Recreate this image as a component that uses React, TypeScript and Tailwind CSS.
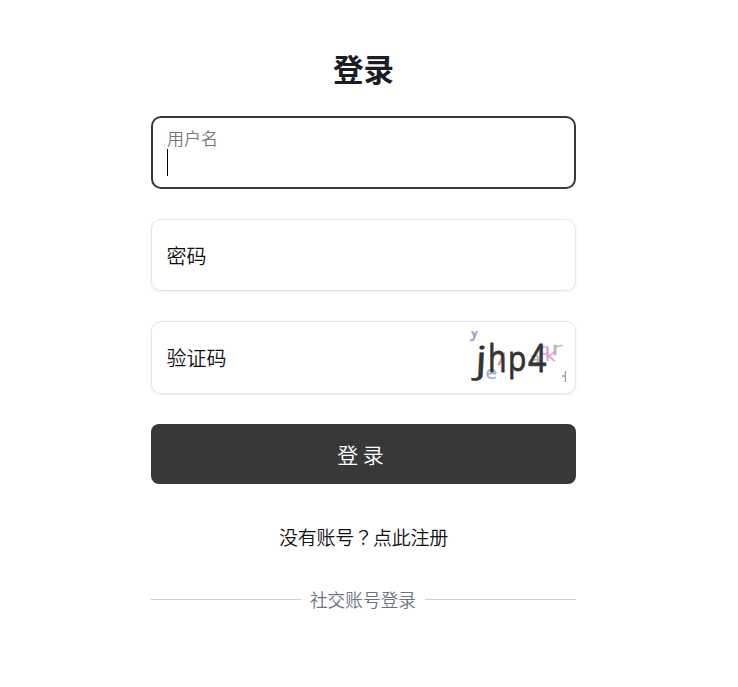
import clsx from "clsx";
import type { ReactNode } from "react";

const captchaNoise = [
  { char: "y", x: 2.5, y: 6, size: 19, scale: 1.05, color: "#9aa9cb" },
  { char: "e", x: 19.5, y: 48, size: 17, scale: 1.1, color: "#a3aed2" },
  { char: "7", x: 28.5, y: 33.5, size: 16, scale: 1.15, color: "#cf9090" },
  { char: "a", x: 64, y: 34, size: 17, scale: 1, color: "#a5bda5" },
  { char: "q", x: 74, y: 24, size: 16, scale: 0.95, color: "#dfa8d8" },
  { char: "k", x: 79, y: 30, size: 16, scale: 1.15, color: "#e3a0db" },
  { char: "r", x: 85.5, y: 24, size: 17, scale: 1.5, color: "#b3c2a8" },
];

const captchaCode = [
  { char: "j", x: 8.5, y: 41, size: 36, scale: 1.35, skew: -3 },
  { char: "h", x: 22, y: 41, size: 38, scale: 0.8, skew: 0 },
  { char: "p", x: 42, y: 40, size: 34, scale: 0.88, skew: 0 },
  { char: "4", x: 62, y: 40.5, size: 38, scale: 0.85, skew: 0 },
];

const Captcha = () => (
  <svg className="h-[53px] w-[100px] overflow-hidden" viewBox="0 0 100 53">
    {captchaNoise.map((item) => (
      <text
        key={item.char}
        fontSize={item.size}
        fill={item.color}
        stroke={item.color}
        strokeWidth="0.3"
        fontFamily="DejaVu Sans, sans-serif"
        transform={`translate(${item.x} ${item.y}) scale(${item.scale} 1)`}
      >
        {item.char}
      </text>
    ))}
    {captchaCode.map((item) => (
      <text
        key={item.char}
        fontSize={item.size}
        fill="#333"
        stroke="#333"
        strokeWidth={item.char === "j" ? 0.3 : 0.8}
        strokeLinejoin="round"
        fontFamily="Open Sans, sans-serif"
        transform={`translate(${item.x} ${item.y}) skewX(${item.skew}) scale(${item.scale} 1)`}
      >
        {item.char}
      </text>
    ))}
    <path d="M96 45h4M99.4 40v6" stroke="#96a0c8" strokeWidth="1.3" fill="none" />
    <path d="M99.4 46v5" stroke="#d08888" strokeWidth="1.3" />
  </svg>
);

type FieldProps = {
  label: string;
  className: string;
  children?: ReactNode;
};

const Field = ({ label, className, children }: FieldProps) => (
  <div
    className={clsx(
      "flex items-center justify-between rounded-[10px] border border-[#e5e6e8] bg-white pl-[14.5px] pr-[9px] shadow-[0_1px_3px_rgba(0,0,0,0.07)]",
      className
    )}
  >
    <label className="pt-px text-[20px] font-[350] leading-7 text-[#111]">{label}</label>
    {children}
  </div>
);

export default function App() {
  return (
    <div className="h-[687px] bg-white pl-[151px] font-['Noto_Sans_CJK_SC',sans-serif]">
      <div className="flex w-[425px] flex-col pt-12">
        <h1 className="text-center text-[30.5px] font-bold leading-10 text-[#1a1d23]">登录</h1>

        <div className="mt-7 h-[73px] rounded-[10px] border-2 border-[#343840] px-[14px] pt-[9px]">
          <label className="block text-[17px] font-[350] leading-[22px] text-[#777]">用户名</label>
          <div className="h-[27px] w-px bg-black" />
        </div>

        <div className="mt-[30px] flex flex-col gap-[30px]">
          <Field label="密码" className="h-[72px]" />
          <Field label="验证码" className="h-[73px]">
            <Captcha />
          </Field>
        </div>

        <button className="mt-[30px] h-[60px] rounded-lg bg-[#383838] pr-[6px] pt-px text-[21px] font-[350] text-white">
          登 录
        </button>

        <p className="mt-[39px] text-center text-[19px] font-[350] leading-7 tracking-[-0.2px] text-[#111]">
          没有账号<span className="font-['Noto_Sans_CJK_TC',sans-serif]">？</span>点此注册
        </p>

        {/* Social login divider */}
        <div className="mt-[34px] flex items-center text-[#6b7280]">
          <div className="h-px w-[150px] bg-[#cfcfcf]" />
          <span className="flex-1 text-center text-[17.7px] font-[350] leading-7">社交账号登录</span>
          <div className="h-px w-[151px] bg-[#cfcfcf]" />
        </div>
      </div>
    </div>
  );
}
